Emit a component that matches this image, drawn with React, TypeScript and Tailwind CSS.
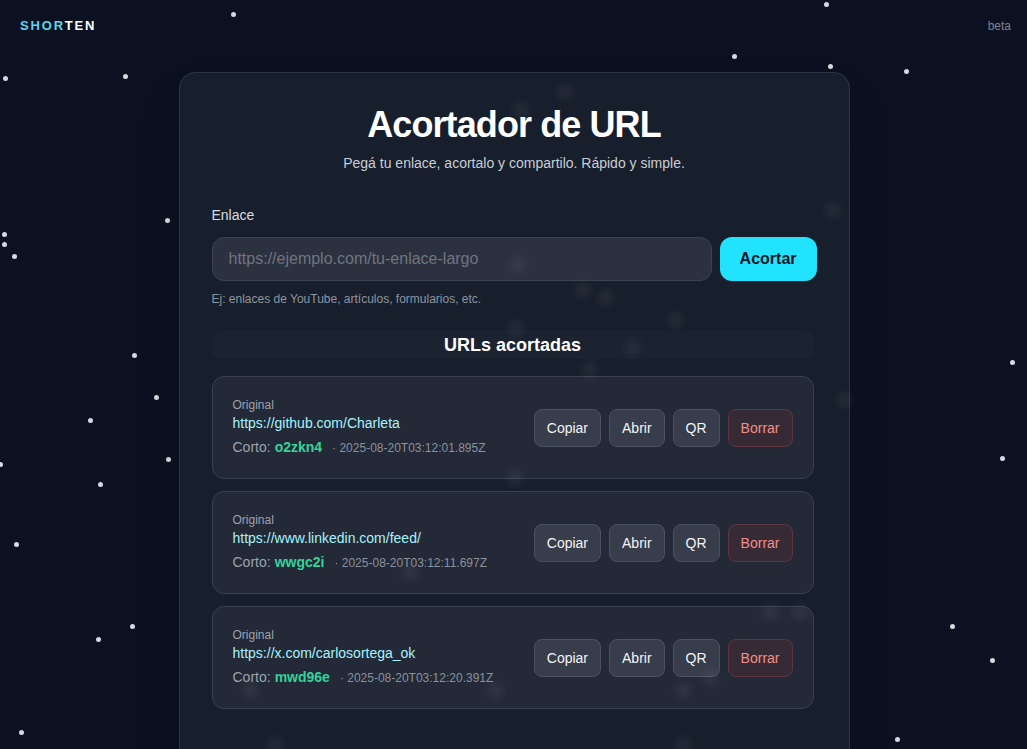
import React from "react";

const stars: [number, number][] = [
  [233, 14], [826, 4], [5, 78], [125, 76], [734, 56], [830, 66], [906, 71],
  [167, 220], [4, 234], [4, 244], [14, 256], [134, 355], [1012, 362], [156, 397],
  [90, 420], [0, 464], [168, 459], [1002, 458], [100, 484], [16, 544], [98, 639],
  [132, 626], [952, 626], [992, 660], [21, 732], [897, 739],
];

const glows: [number, number][] = [
  [565, 92], [521, 110], [833, 210], [518, 265], [583, 290], [606, 298], [675, 320],
  [633, 348], [516, 328], [590, 370], [845, 400], [515, 478], [410, 572], [770, 612],
  [800, 612], [250, 690], [683, 690], [710, 678], [275, 745], [683, 745], [495, 690],
];

const links = [
  { original: "https://github.com/Charleta", code: "o2zkn4", date: "2025-08-20T03:12:01.895Z" },
  { original: "https://www.linkedin.com/feed/", code: "wwgc2i", date: "2025-08-20T03:12:11.697Z" },
  { original: "https://x.com/carlosortega_ok", code: "mwd96e", date: "2025-08-20T03:12:20.391Z" },
];

function LinkRow({ original, code, date }: { original: string; code: string; date: string }) {
  return (
    <div className="flex items-center justify-between rounded-xl border border-[#394050] bg-[#232937] p-5">
      <div className="flex flex-col">
        <span className="text-[12px] leading-4 text-[#9ca3af]">Original</span>
        <span className="text-[14px] leading-5 text-[#a5f3fc]">{original}</span>
        <div className="mt-1 flex items-baseline leading-5">
          <span className="text-[14px] text-[#9ca3af]">Corto:</span>
          <span className="ml-1 text-[14px] font-bold text-[#34d399]">{code}</span>
          <span className="ml-2.5 text-[12px] text-[#8b919c]">· {date}</span>
        </div>
      </div>
      <div className="flex gap-2 text-[14px] leading-5">
        <button className="rounded-lg border border-[#4a5161] bg-[#373d4a] px-3 py-2 text-[#f3f4f6]">Copiar</button>
        <button className="rounded-lg border border-[#4a5161] bg-[#373d4a] px-3 py-2 text-[#f3f4f6]">Abrir</button>
        <button className="rounded-lg border border-[#4a5161] bg-[#373d4a] px-3 py-2 text-[#f3f4f6]">QR</button>
        <button className="rounded-lg border border-[#5e3540] bg-[#362b35] px-3 py-2 text-[#f38b8b]">Borrar</button>
      </div>
    </div>
  );
}

export default function App() {
  return (
    <div
      className="relative h-[749px] overflow-hidden bg-[#0b1120] text-white"
      style={{ fontFamily: '"Liberation Sans", Arial, sans-serif' }}
    >
      {stars.map(([x, y], i) => (
        <div
          key={i}
          className="absolute h-[5px] w-[5px] rounded-full bg-[#d6d9de]"
          style={{ left: x - 2.5, top: y - 2.5 }}
        />
      ))}

      <header className="relative z-10 flex h-[52px] items-center justify-between pl-5 pr-4">
        <div className="text-[13px] font-bold tracking-[0.14em]">
          <span className="text-[#5ad7ee]">SHOR</span>
          <span className="text-white">TEN</span>
        </div>
        <span className="text-[12px] text-[#7c8391]">beta</span>
      </header>

      <main className="relative z-10 flex justify-center pt-5">
        <div className="ml-px w-[671px] rounded-2xl border border-[#2e3544] bg-[#181f2c] px-8 pb-16 pt-8 shadow-2xl">
          <h1 className="text-center text-4xl font-bold leading-10 tracking-tight text-white">Acortador de URL</h1>
          <p className="mt-2 text-center text-[14px] leading-5 text-[#c9ced6]">
            Pegá tu enlace, acortalo y compartilo. Rápido y simple.
          </p>

          <label className="mt-8 block text-[14px] leading-5 text-[#d8dce2]">Enlace</label>
          <div className="mt-3 flex gap-2">
            <input
              className="h-11 flex-1 rounded-xl border border-[#3b4252] bg-[#2b313e] px-4 text-[16px] text-white outline-none placeholder:text-[#6f7582]"
              placeholder="https://ejemplo.com/tu-enlace-largo"
            />
            <button className="h-11 rounded-xl bg-[#22e3fd] px-5 text-[16px] font-bold text-[#0f172a]">Acortar</button>
          </div>
          <p className="mt-2.5 text-[12px] font-medium leading-4 text-[#8e949f]">Ej: enlaces de YouTube, artículos, formularios, etc.</p>

          <h2 className="mt-6 mr-[3px] rounded-lg bg-[#1b2230] text-center text-[18px] font-bold leading-7 text-white">
            URLs acortadas
          </h2>

          <div className="mt-[17px] mr-[3px] flex flex-col gap-3">
            {links.map((l) => (
              <LinkRow key={l.code} {...l} />
            ))}
          </div>
        </div>
      </main>

      {glows.map(([x, y], i) => (
        <div
          key={i}
          className="pointer-events-none absolute z-20 h-4 w-4 rounded-full bg-white/[0.06] blur-[4px]"
          style={{ left: x - 8, top: y - 8 }}
        />
      ))}
    </div>
  );
}
